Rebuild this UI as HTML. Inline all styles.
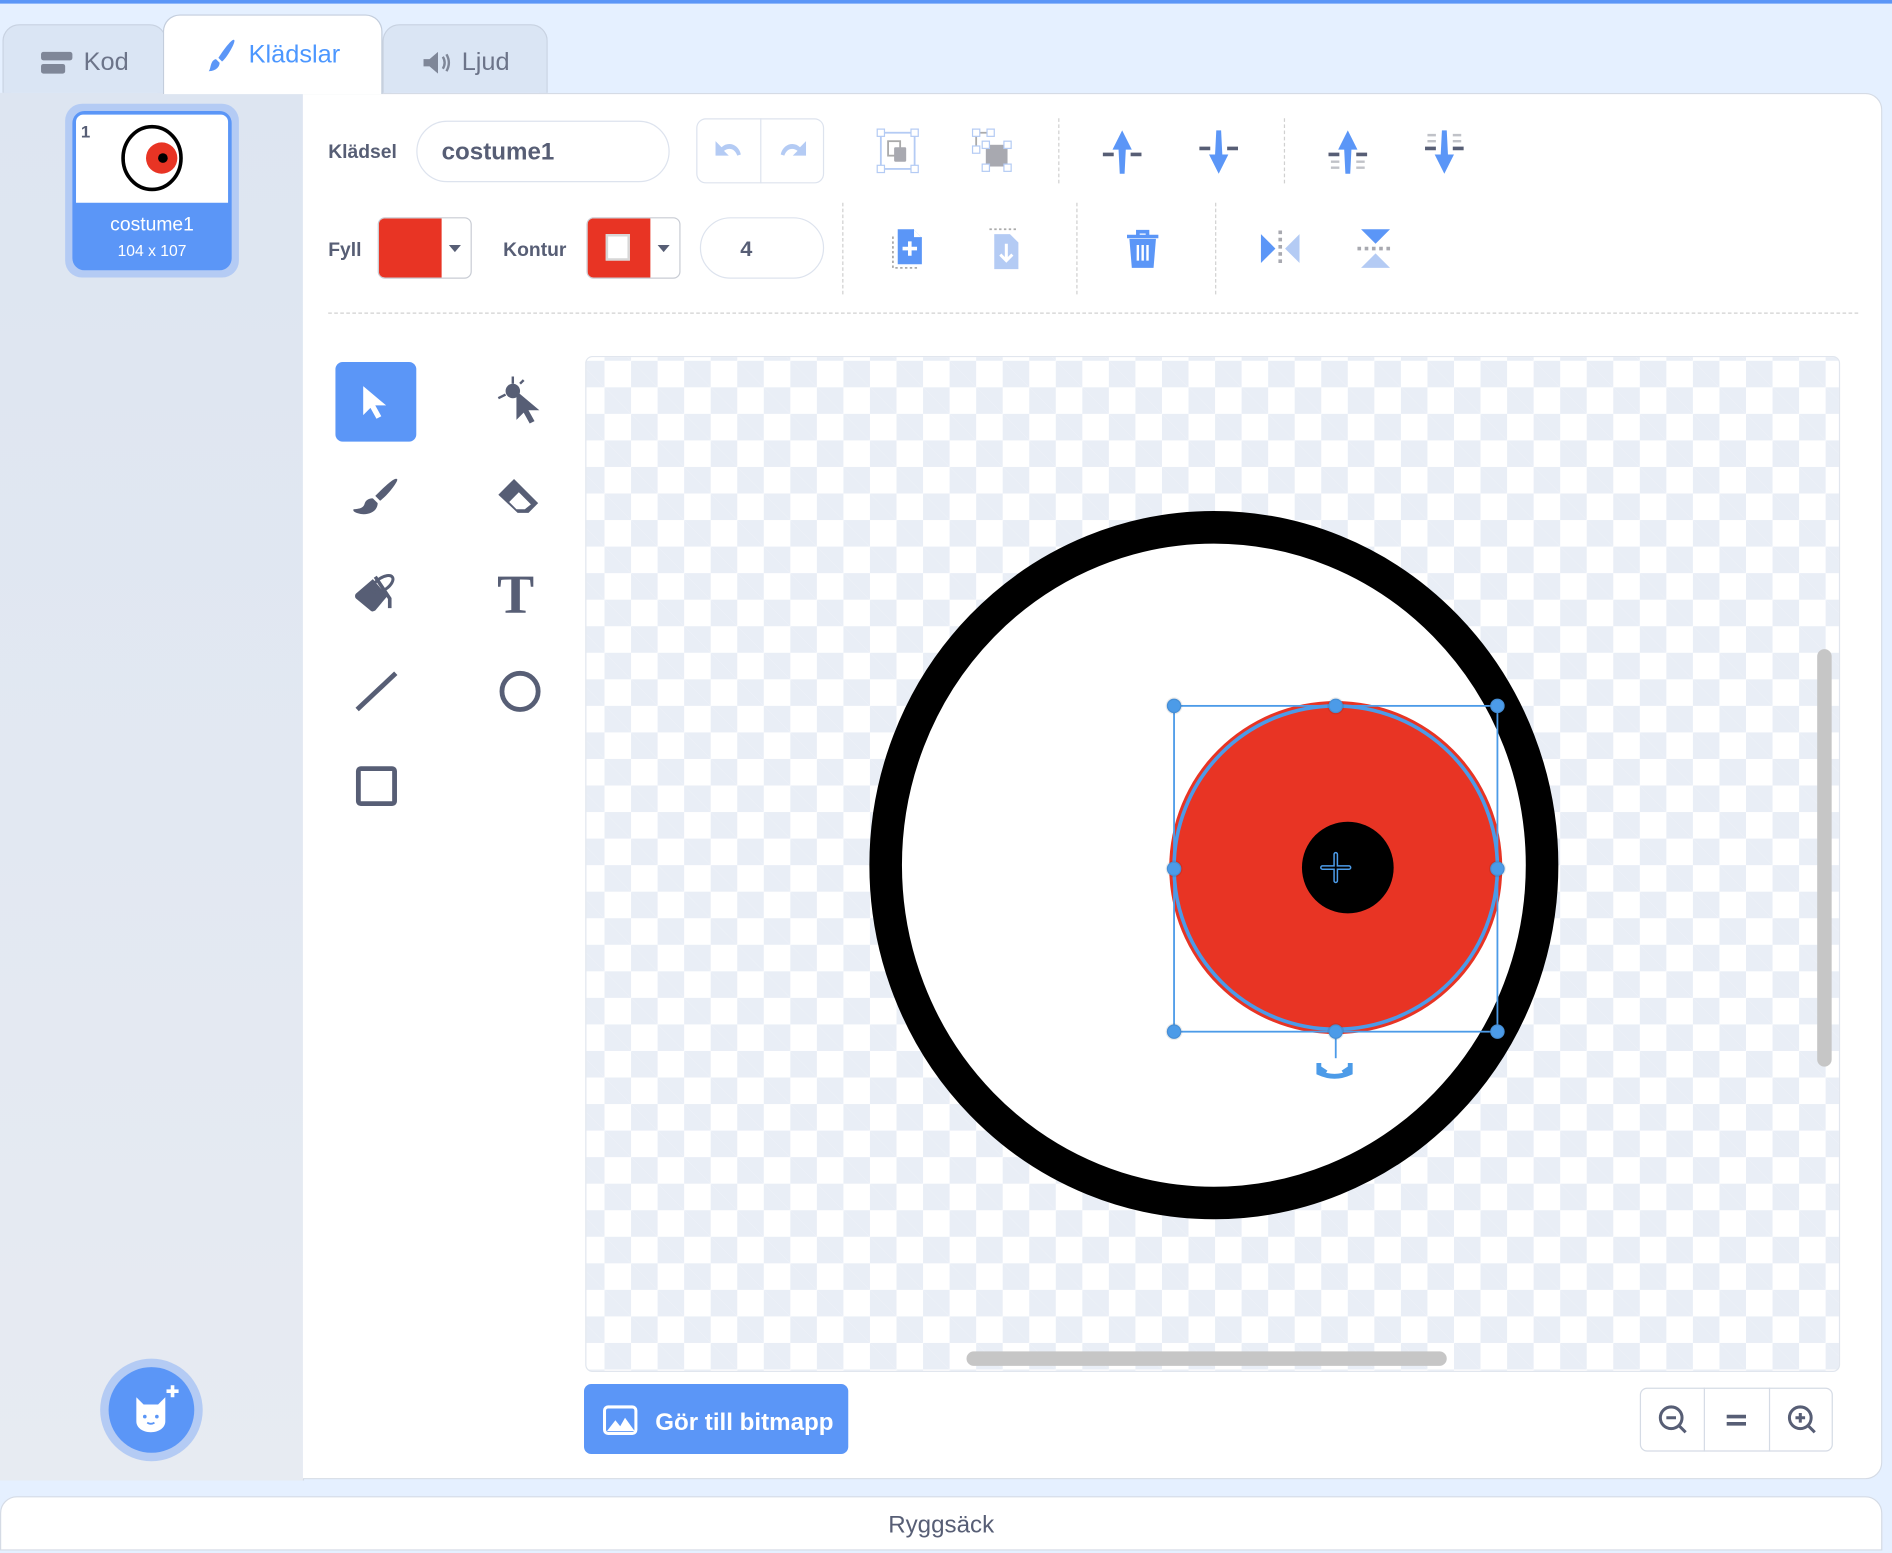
<!DOCTYPE html>
<html><head><meta charset="utf-8"><style>
html,body{margin:0;padding:0;width:1892px;height:1550px;overflow:hidden;background:#e5f0ff;font-family:"Liberation Sans",sans-serif;}
#w{position:absolute;left:0;top:0;width:1568px;height:1285px;transform:scale(1.20663);transform-origin:0 0;}
.a{position:absolute;}
.tab{position:absolute;top:20px;height:57px;background:#d9e3f2;border:1px solid #c3cddc;border-bottom:none;border-radius:14px 14px 0 0;box-sizing:border-box;color:#575e75;font-size:21px;display:flex;align-items:center;justify-content:center;gap:8px;opacity:.85;padding-top:6px}
.lbl{position:absolute;font-size:16px;font-weight:bold;color:#575e75}
.sep{position:absolute;border-left:1px dashed #d0d0d0;}
.ic{position:absolute;}
</style></head><body><div id="w">
<div class="a" style="left:0;top:0;width:1568px;height:3px;background:#5b96f7"></div>
<div class="tab" style="left:2px;width:136px"><svg width="28" height="20" viewBox="0 0 28 20"><rect x="1" y="1" width="26" height="7" rx="2" fill="#6e7587"/><rect x="1" y="11" width="20" height="8" rx="2" fill="#6e7587"/></svg>Kod</div>
<div class="tab" style="left:317px;width:137px"><svg width="26" height="22" viewBox="0 0 26 22"><path d="M2 8h5l7-6v18l-7-6H2z" fill="#6e7587"/><path d="M18 6q3 5 0 10M21 4q4 7 0 14" stroke="#6e7587" stroke-width="2" fill="none"/></svg>Ljud</div>
<div class="tab" style="left:135px;top:12px;height:66px;width:182px;background:#fff;color:#4c97ff;opacity:1;z-index:2;padding-top:0;padding-bottom:0"><svg width="28" height="30" viewBox="0 0 28 30"><path d="M24 2c2 1-6 15-10 18l-3-3C14 12 22 1 24 2z" fill="#5b96f7"/><path d="M9 18l3 3c0 4-4 7-9 7 2-2 1-9 6-10z" fill="#5b96f7"/></svg>Klädslar</div>
<div class="a" style="left:0;top:77px;width:251px;height:1150px;background:linear-gradient(#dde5f1,#e7ebf2);border-right:1px solid #d5dbe5"></div>
<div class="a" style="left:251px;top:77px;width:1309px;height:1149px;background:#fff;border-radius:0 14px 14px 0;border:1px solid #d5dbe5;border-left:none;box-sizing:border-box"></div>
<div class="a" style="left:54px;top:86px;width:144px;height:144px;border-radius:14px;background:#b4cbf4"></div>
<div class="a" style="left:60px;top:92px;width:132px;height:132px;border-radius:10px;background:#5b96f7"></div>
<div class="a" style="left:63px;top:95px;width:126px;height:73px;background:#fff;border-radius:6px 6px 0 0"></div>
<div class="a" style="left:67px;top:101px;font-size:14px;color:#575e75;font-weight:bold">1</div>
<svg class="a" style="left:99px;top:103px" width="54" height="56" viewBox="0 0 54 56"><ellipse cx="27" cy="28" rx="24" ry="26" fill="#fff" stroke="#000" stroke-width="3"/><circle cx="35" cy="28" r="13" fill="#e83424"/><circle cx="36" cy="28" r="4" fill="#000"/></svg>
<div class="a" style="left:60px;top:178px;width:132px;text-align:center;color:#fff;font-size:16px">costume1</div>
<div class="a" style="left:60px;top:200px;width:132px;text-align:center;color:#fff;font-size:13px">104 x 107</div>
<div class="a" style="left:83px;top:1126px;width:85px;height:85px;border-radius:50%;background:#b4cbf4"></div>
<div class="a" style="left:90px;top:1133px;width:71px;height:71px;border-radius:50%;background:#5b96f7"></div>
<svg class="a" style="left:105px;top:1146px" width="46" height="44" viewBox="0 0 46 44"><path d="M8 12l6 6h12l6-6v20c0 5-5 9-12 9s-12-4-12-9z" fill="#fff"/><path d="M38 2v10M33 7h10" stroke="#fff" stroke-width="3"/><circle cx="15" cy="28" r="1.5" fill="#5b96f7"/><circle cx="25" cy="28" r="1.5" fill="#5b96f7"/><path d="M17 33q3 2 6 0" stroke="#5b96f7" stroke-width="1.5" fill="none"/></svg>
<div class="a" style="left:0;top:1240px;width:1560px;height:45px;background:#fff;border:1px solid #d5dbe5;border-radius:14px 14px 0 0;box-sizing:border-box;text-align:center;line-height:46px;font-size:20px;color:#575e75">Ryggsäck</div>
<div class="lbl" style="left:272px;top:118px">Klädsel</div>
<div class="a" style="left:345px;top:100px;width:210px;height:51px;border:1px solid #dde3ee;border-radius:26px;box-sizing:border-box;font-size:20px;font-weight:bold;color:#575e75;line-height:51px;padding-left:20px">costume1</div>
<div class="a" style="left:577px;top:98px;width:106px;height:54px;border:1px solid #dde3ee;border-radius:8px;box-sizing:border-box"></div>
<div class="a" style="left:630px;top:98px;width:1px;height:54px;background:#dde3ee"></div>
<svg class="ic" style="left:589px;top:113px" width="30" height="24" viewBox="0 0 30 24"><path d="M4 4v12h11l-4-4c4-3 9-2 11 4l3-1c-2-9-11-11-16-6z" fill="#b4cbf4"/></svg>
<svg class="ic" style="left:642px;top:113px" width="30" height="24" viewBox="0 0 30 24"><path d="M26 4v12H15l4-4c-4-3-9-2-11 4l-3-1c2-9 11-11 16-6z" fill="#b4cbf4"/></svg>
<svg class="ic" style="left:726px;top:106px" width="36" height="38" viewBox="0 0 36 38"><rect x="4" y="4" width="28" height="30" fill="none" stroke="#b4cbf4" stroke-width="1.5"/><rect x="1" y="1" width="6" height="6" fill="#fff" stroke="#b4cbf4"/><rect x="29" y="1" width="6" height="6" fill="#fff" stroke="#b4cbf4"/><rect x="1" y="31" width="6" height="6" fill="#fff" stroke="#b4cbf4"/><rect x="29" y="31" width="6" height="6" fill="#fff" stroke="#b4cbf4"/><rect x="10" y="11" width="10" height="12" fill="none" stroke="#aaa" stroke-width="1.5"/><rect x="15" y="16" width="10" height="12" rx="1" fill="#a8a9b0"/></svg>
<svg class="ic" style="left:805px;top:106px" width="36" height="38" viewBox="0 0 36 38"><path d="M4 4h12M4 4v14" stroke="#aaa" stroke-width="1.5"/><rect x="1" y="1" width="6" height="6" fill="#fff" stroke="#b4cbf4"/><rect x="13" y="1" width="6" height="6" fill="#fff" stroke="#b4cbf4"/><rect x="1" y="15" width="6" height="6" fill="#fff" stroke="#b4cbf4"/><rect x="12" y="14" width="18" height="18" fill="#a8a9b0"/><rect x="9" y="11" width="6" height="6" fill="#fff" stroke="#b4cbf4"/><rect x="27" y="11" width="6" height="6" fill="#fff" stroke="#b4cbf4"/><rect x="9" y="30" width="6" height="6" fill="#fff" stroke="#b4cbf4"/><rect x="27" y="30" width="6" height="6" fill="#fff" stroke="#b4cbf4"/></svg>
<div class="sep" style="left:877px;top:98px;height:54px"></div>
<svg class="ic" style="left:912px;top:106px" width="36" height="40" viewBox="0 0 36 40"><path d="M18 2l-8 16h5l1 20h4l1-20h5z" fill="#5b96f7"/><path d="M2 22h9M25 22h9" stroke="#575e75" stroke-width="3"/></svg>
<svg class="ic" style="left:992px;top:106px" width="36" height="40" viewBox="0 0 36 40"><path d="M18 38l-8-16h5l1-20h4l1 20h5z" fill="#5b96f7"/><path d="M2 17h9M25 17h9" stroke="#575e75" stroke-width="3"/></svg>
<div class="sep" style="left:1064px;top:98px;height:54px"></div>
<svg class="ic" style="left:1099px;top:106px" width="36" height="40" viewBox="0 0 36 40"><path d="M18 2l-8 16h5l1 20h4l1-20h5z" fill="#5b96f7"/><path d="M2 22h9M25 22h9" stroke="#575e75" stroke-width="3"/><path d="M4 28h7M25 28h7M4 33h7M25 33h7" stroke="#c0c2c8" stroke-width="2"/></svg>
<svg class="ic" style="left:1179px;top:106px" width="36" height="40" viewBox="0 0 36 40"><path d="M18 38l-8-16h5l1-20h4l1 20h5z" fill="#5b96f7"/><path d="M2 17h9M25 17h9" stroke="#575e75" stroke-width="3"/><path d="M4 6h7M25 6h7M4 11h7M25 11h7" stroke="#c0c2c8" stroke-width="2"/></svg>
<div class="lbl" style="left:272px;top:199px">Fyll</div>
<div class="a" style="left:313px;top:180px;width:78px;height:51px;border:1px solid #c8ccd4;border-radius:6px;box-sizing:border-box;overflow:hidden;background:#fff"><div style="width:52px;height:51px;background:#e83424"></div></div>
<div class="a" style="left:372px;top:203px;border:5px solid transparent;border-top:6px solid #575e75"></div>
<div class="lbl" style="left:417px;top:199px">Kontur</div>
<div class="a" style="left:486px;top:180px;width:78px;height:51px;border:1px solid #c8ccd4;border-radius:6px;box-sizing:border-box;overflow:hidden;background:#fff"><div style="width:52px;height:51px;background:#e83424;position:relative"><div style="position:absolute;left:15px;top:13px;width:20px;height:22px;background:#fff;border:2px solid #d7d7d7;box-sizing:border-box"></div></div></div>
<div class="a" style="left:545px;top:203px;border:5px solid transparent;border-top:6px solid #575e75"></div>
<div class="a" style="left:580px;top:180px;width:103px;height:51px;border:1px solid #dde3ee;border-radius:26px;box-sizing:border-box;padding-right:26px;text-align:center;line-height:51px;font-size:18px;font-weight:bold;color:#575e75">4</div>
<div class="sep" style="left:698px;top:168px;height:76px"></div>
<svg class="ic" style="left:738px;top:188px" width="30" height="36" viewBox="0 0 30 36"><path d="M6 2h13l7 7v22H6z" fill="#5b96f7"/><path d="M19 2v7h7" fill="#fff" stroke="#5b96f7"/><path d="M16 12v12M10 18h12" stroke="#fff" stroke-width="3"/><path d="M2 8v26h20" stroke="#aaa" stroke-width="1.5" stroke-dasharray="2 2" fill="none"/></svg>
<svg class="ic" style="left:818px;top:188px" width="30" height="36" viewBox="0 0 30 36"><path d="M6 6h13l7 7v22H6z" fill="#b4cbf4"/><path d="M16 14v14M11 23l5 5 5-5" stroke="#fff" stroke-width="2.5" fill="none"/><path d="M2 2h22" stroke="#aaa" stroke-width="1.5" stroke-dasharray="2 2"/></svg>
<div class="sep" style="left:892px;top:168px;height:76px"></div>
<svg class="ic" style="left:932px;top:189px" width="30" height="36" viewBox="0 0 30 36"><path d="M2 7h26M11 7V3h8v4" stroke="#5b96f7" stroke-width="3" fill="none"/><path d="M4 9h22l-2 24H6z" fill="#5b96f7"/><path d="M11 14v13M15 14v13M19 14v13" stroke="#fff" stroke-width="2"/></svg>
<div class="sep" style="left:1007px;top:168px;height:76px"></div>
<svg class="ic" style="left:1043px;top:189px" width="36" height="34" viewBox="0 0 36 34"><path d="M2 5l12 12-12 12z" fill="#5b96f7"/><path d="M34 5L22 17l12 12z" fill="#b4cbf4"/><path d="M18 2v30" stroke="#a8a9b0" stroke-width="3" stroke-dasharray="3 3"/></svg>
<svg class="ic" style="left:1123px;top:188px" width="34" height="36" viewBox="0 0 34 36"><path d="M5 2h24L17 14z" fill="#5b96f7"/><path d="M5 34h24L17 22z" fill="#b4cbf4"/><path d="M2 18h30" stroke="#a8a9b0" stroke-width="3" stroke-dasharray="3 3"/></svg>
<div class="a" style="left:272px;top:259px;width:1268px;border-top:1px dashed #d0d0d0"></div>
<div class="a" style="left:278px;top:300px;width:67px;height:66px;border-radius:6px;background:#5b96f7"></div>
<svg class="ic" style="left:298px;top:318px" width="28" height="32" viewBox="0 0 28 32"><path d="M3 2v24l6-6 5 9 4-2-5-9h9z" fill="#fff"/></svg>
<svg class="ic" style="left:410px;top:310px" width="40" height="46" viewBox="0 0 40 46"><circle cx="15" cy="14" r="6" fill="#575e75"/><path d="M15 2v6M3 20l6-3M21 8l3-3" stroke="#575e75" stroke-width="2"/><path d="M18 14v24l6-6 5 9 4-2-5-9h9z" fill="#575e75"/></svg>
<svg class="ic" style="left:291px;top:395px" width="42" height="36" viewBox="0 0 42 36"><path d="M38 2c2 1-8 14-14 18l-4-4C26 10 36 0 38 2z" fill="#575e75"/><path d="M18 18l4 4c0 6-6 10-14 9-4-1-7-2-6-4 4 0 8-1 9-4 1-4 4-5 7-5z" fill="#575e75"/></svg>
<svg class="ic" style="left:410px;top:395px" width="42" height="36" viewBox="0 0 42 36"><path d="M3 15l13-13 20 20-8 8H19z" fill="#575e75"/><path d="M12 21l8-8 10 10-5 4h-7z" fill="#fff"/></svg>
<svg class="ic" style="left:291px;top:470px" width="42" height="44" viewBox="0 0 42 44"><path d="M4 22l14-12 12 14-10 12c-2 1-3 1-4 0L4 26c-1-1-1-3 0-4z" fill="#575e75"/><ellipse cx="26" cy="14" rx="10" ry="5" transform="rotate(-35 26 14)" fill="none" stroke="#575e75" stroke-width="2.5"/><path d="M20 8l12 18v8" stroke="#575e75" stroke-width="3" fill="none"/></svg>
<div class="a" style="left:412px;top:466px;font-family:'Liberation Serif',serif;font-weight:bold;font-size:46px;color:#575e75;line-height:54px">T</div>
<svg class="ic" style="left:293px;top:555px" width="38" height="36" viewBox="0 0 38 36"><path d="M3 33L35 3" stroke="#575e75" stroke-width="4"/></svg>
<svg class="ic" style="left:412px;top:554px" width="38" height="38" viewBox="0 0 38 38"><circle cx="19" cy="19" r="15" fill="none" stroke="#575e75" stroke-width="4"/></svg>
<svg class="ic" style="left:294px;top:633px" width="36" height="36" viewBox="0 0 36 36"><rect x="3" y="4" width="30" height="29" rx="2" fill="none" stroke="#575e75" stroke-width="4"/></svg>
<div class="a" style="left:485px;top:295px;width:1040px;height:842px;border:1px solid #e1e6ee;border-radius:6px;box-sizing:border-box;overflow:hidden;background-color:#fff;background-image:linear-gradient(45deg,#e9eef6 25%,transparent 25%,transparent 75%,#e9eef6 75%),linear-gradient(45deg,#e9eef6 25%,transparent 25%,transparent 75%,#e9eef6 75%);background-size:44px 44px;background-position:15px 3px,-7px 25px">
<svg width="1040" height="842" style="position:absolute;left:0;top:0" viewBox="485 295 1040 842">
<ellipse cx="1005" cy="716" rx="272" ry="280" fill="#fff" stroke="#000" stroke-width="27"/>
<circle cx="1106" cy="718" r="138" fill="#e83424"/>
<circle cx="1116" cy="718" r="38" fill="#000"/>
<circle cx="1106" cy="718" r="134" fill="none" stroke="#4c9be8" stroke-width="3"/>
<rect x="972" y="584" width="268" height="270" fill="none" stroke="#4c9be8" stroke-width="1.5"/>
<path d="M1106 854v22" stroke="#4c9be8" stroke-width="1.5"/>
<path d="M1092 880v8q13 6 26 0v-8M1098 888l-6-4M1112 888l6-4" stroke="#4c9be8" stroke-width="4" fill="none"/>
<g fill="#4c9be8" stroke="rgba(0,0,0,.08)" stroke-width="2"><circle cx="972" cy="584" r="6"/><circle cx="1106" cy="584" r="6"/><circle cx="1240" cy="584" r="6"/><circle cx="972" cy="719" r="6"/><circle cx="1240" cy="719" r="6"/><circle cx="972" cy="854" r="6"/><circle cx="1106" cy="854" r="6"/><circle cx="1240" cy="854" r="6"/></g>
<path d="M1106 707v22M1095 718h22" stroke="#4c9be8" stroke-width="4" stroke-linecap="round"/>
<path d="M1106 707v22M1095 718h22" stroke="#000" stroke-width="1.5" stroke-linecap="round"/>
<rect x="1505" y="537" width="12" height="346" rx="6" fill="#c6c6c6"/>
<rect x="800" y="1119" width="398" height="12" rx="6" fill="#c6c6c6"/>
</svg></div>
<div class="a" style="left:484px;top:1147px;width:219px;height:58px;border-radius:6px;background:#5b96f7;color:#fff;font-weight:bold;font-size:20px;line-height:64px;padding-left:59px;box-sizing:border-box">Gör till bitmapp</div>
<svg class="ic" style="left:499px;top:1164px" width="30" height="26" viewBox="0 0 30 26"><rect x="2" y="2" width="26" height="22" rx="3" fill="none" stroke="#fff" stroke-width="2.5"/><path d="M4 22l7-9 4 5 4-7 8 11z" fill="#fff"/></svg>
<div class="a" style="left:1359px;top:1150px;width:160px;height:53px;border:1px solid #d5dbe5;border-radius:6px;box-sizing:border-box"></div>
<div class="a" style="left:1412px;top:1150px;width:1px;height:53px;background:#d5dbe5"></div>
<div class="a" style="left:1466px;top:1150px;width:1px;height:53px;background:#d5dbe5"></div>
<svg class="ic" style="left:1373px;top:1163px" width="28" height="28" viewBox="0 0 28 28"><circle cx="12" cy="12" r="9" fill="none" stroke="#575e75" stroke-width="2.5"/><path d="M18 18l6 6M8 12h8" stroke="#575e75" stroke-width="2.5"/></svg>
<svg class="ic" style="left:1428px;top:1168px" width="22" height="18" viewBox="0 0 22 18"><path d="M3 6h16M3 12h16" stroke="#575e75" stroke-width="3"/></svg>
<svg class="ic" style="left:1480px;top:1163px" width="28" height="28" viewBox="0 0 28 28"><circle cx="12" cy="12" r="9" fill="none" stroke="#575e75" stroke-width="2.5"/><path d="M18 18l6 6M8 12h8M12 8v8" stroke="#575e75" stroke-width="2.5"/></svg>
</div></body></html>
